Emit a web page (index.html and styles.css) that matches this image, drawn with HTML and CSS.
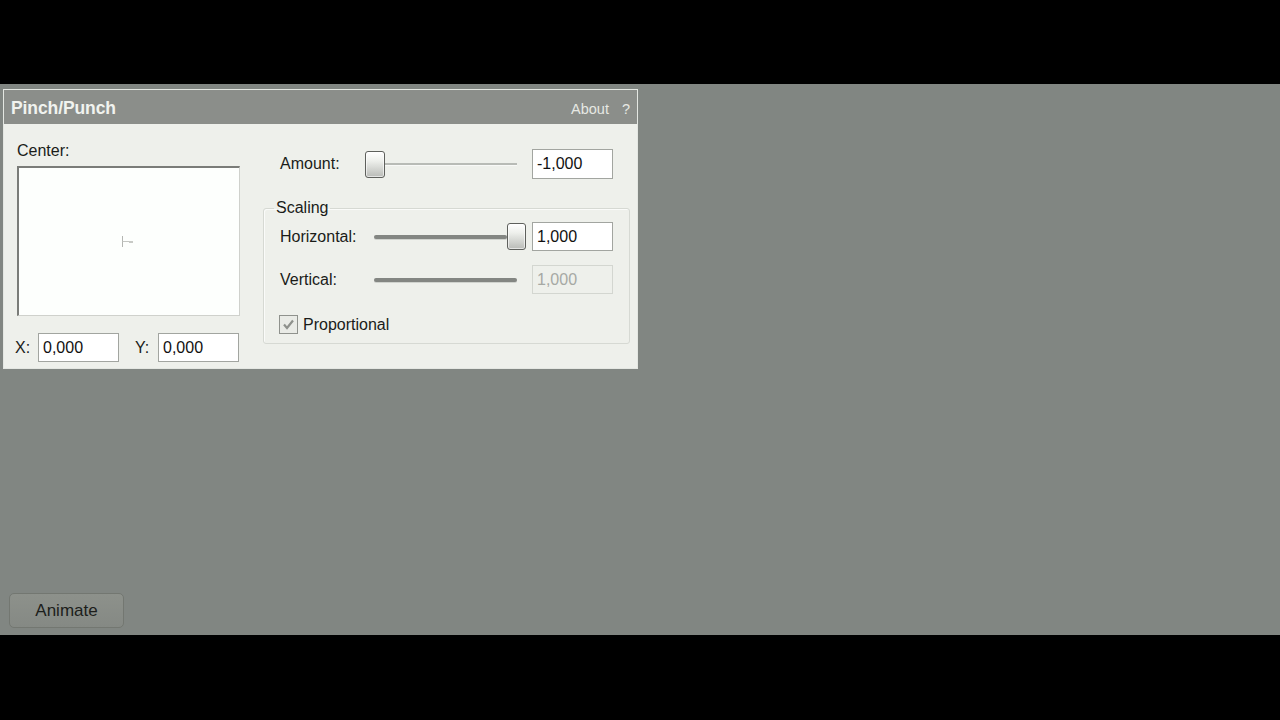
FILE: index.html
```html
<!DOCTYPE html>
<html>
<head>
<meta charset="utf-8">
<link rel="stylesheet" href="styles.css">
</head>
<body>
<div class="screen">
  <div class="band-top"></div>
  <div class="stage">
    <div class="panel">
      <div class="titlebar">
        <span class="title">Pinch/Punch</span>
        <span class="about">About<span class="help">?</span></span>
      </div>
      <div class="panel-body">
        <div class="left-col">
          <div class="label center-label">Center:</div>
          <div class="center-box">
            <svg class="cross" width="14" height="11" viewBox="0 0 14 11">
              <line x1="1.5" y1="0" x2="1.5" y2="11" stroke="#b4b6b2" stroke-width="1"/>
              <line x1="1.5" y1="5.5" x2="12" y2="5.5" stroke="#c4c6c2" stroke-width="1"/>
              <rect x="8" y="5" width="4" height="2" fill="#c8cac6"/>
            </svg>
          </div>
          <div class="xy-row">
            <span class="label xy-label">X:</span>
            <div class="field xy-field">0,000</div>
            <span class="label xy-label y-label">Y:</span>
            <div class="field xy-field">0,000</div>
          </div>
        </div>
        <div class="right-col">
          <div class="row amount-row">
            <span class="label amount-label">Amount:</span>
            <div class="slider amount-slider">
              <div class="thumb"></div>
              <div class="track thin"></div>
            </div>
            <div class="field num-field">-1,000</div>
          </div>
          <fieldset class="group">
            <legend class="label legend">Scaling</legend>
            <div class="row scale-row">
              <span class="label scale-label">Horizontal:</span>
              <div class="slider scale-slider">
                <div class="track thick h-track"></div>
                <div class="thumb"></div>
              </div>
              <div class="field num-field">1,000</div>
            </div>
            <div class="row scale-row v-row">
              <span class="label scale-label">Vertical:</span>
              <div class="slider scale-slider">
                <div class="track thick v-track"></div>
              </div>
              <div class="field num-field disabled">1,000</div>
            </div>
            <div class="row check-row">
              <span class="checkbox">
                <svg width="13" height="13" viewBox="0 0 13 13">
                  <path d="M2 6.5 L5 10 L11 2.5" fill="none" stroke="#8e918c" stroke-width="2.2"/>
                </svg>
              </span>
              <span class="label">Proportional</span>
            </div>
          </fieldset>
        </div>
      </div>
    </div>
    <button class="animate">Animate</button>
  </div>
  <div class="band-bottom"></div>
</div>
</body>
</html>
```

FILE: styles.css
```css
html, body {
  margin: 0;
  padding: 0;
  background: #000;
}

.screen {
  width: 1280px;
  height: 720px;
  display: flex;
  flex-direction: column;
  font-family: "Liberation Sans", Arial, sans-serif;
}

.band-top {
  height: 84px;
  background: #000;
}

.stage {
  height: 551px;
  background: #818682;
  padding: 5px 0 0 3px;
  box-sizing: border-box;
  display: flex;
  flex-direction: column;
  justify-content: space-between;
  align-items: flex-start;
}

.band-bottom {
  flex: 1;
  background: #000;
}

.panel {
  width: 635px;
  height: 280px;
  box-sizing: border-box;
  border: 1px solid #e4e7e2;
  background: #eef0eb;
  display: flex;
  flex-direction: column;
}

.titlebar {
  height: 34px;
  box-sizing: border-box;
  background: #8b8e8a;
  display: flex;
  align-items: center;
  justify-content: space-between;
  padding: 3px 7px 0 7px;
}

.title {
  font-weight: bold;
  font-size: 17.5px;
  color: #f1f3ef;
  letter-spacing: -0.1px;
}

.about {
  font-size: 14.5px;
  color: #e6e8e3;
}

.help {
  margin-left: 13px;
}

.panel-body {
  flex: 1;
  display: flex;
  padding: 18px 0 0 13px;
}

.label {
  font-size: 16px;
  line-height: 18px;
  color: #1a1c19;
}

.left-col {
  width: 223px;
  display: flex;
  flex-direction: column;
}

.center-label {
  margin-bottom: 6px;
}

.center-box {
  height: 150px;
  box-sizing: border-box;
  background: #fdfffd;
  border-top: 2px solid #7a7c78;
  border-left: 2px solid #7a7c78;
  border-right: 1px solid #cfd1cc;
  border-bottom: 1px solid #cfd1cc;
  display: flex;
  align-items: center;
  justify-content: center;
}

.cross {
  margin-right: 3px;
}

.xy-row {
  margin-top: 17px;
  display: flex;
  align-items: center;
  margin-left: -2px;
}

.xy-label {
  width: 23px;
}

.y-label {
  margin-left: 16px;
}

.field {
  box-sizing: border-box;
  height: 29px;
  background: #fff;
  border: 1px solid #a2a5a0;
  font-size: 16px;
  line-height: 27px;
  color: #111;
  padding-left: 4px;
}

.xy-field {
  width: 81px;
}

.num-field {
  width: 81px;
}

.num-field.disabled {
  background: #eef0eb;
  border-color: #d3d6d0;
  color: #a6a9a4;
}

.right-col {
  margin-left: 23px;
  width: 367px;
  padding-top: 7px;
  display: flex;
  flex-direction: column;
}

.row {
  display: flex;
  align-items: center;
}

.amount-row {
  height: 30px;
  padding-left: 17px;
}

.amount-row .num-field {
  height: 30px;
  margin-left: 15px;
}

.amount-label {
  width: 85px;
}

.slider {
  display: flex;
  align-items: center;
  height: 28px;
}

.thumb {
  width: 19px;
  height: 27px;
  box-sizing: border-box;
  border: 1px solid #5e605c;
  border-radius: 3px;
  background: linear-gradient(to bottom, #ffffff 0%, #eef0ec 35%, #b9bbb7 100%);
  box-shadow: inset 0 0 0 1px rgba(255,255,255,0.6);
}

.amount-slider .thumb {
  width: 20px;
}

.track.thin {
  width: 132px;
  height: 2px;
  background: #b8bbb6;
  border-bottom: 1px solid #f8f9f7;
}

.group {
  margin: 20px 0 0 0;
  padding: 0 0 9px 16px;
  border: 1px solid #d6d9d3;
  border-radius: 3px;
  box-shadow: inset 1px 1px 0 #fafbf9;
  min-width: 0;
}

.legend {
  padding: 0 2px;
  margin-left: -6px;
}

.scale-row {
  height: 29px;
  margin-top: 5px;
}

.v-row {
  margin-top: 14px;
}

.scale-label {
  width: 94px;
}

.scale-slider {
  width: 152px;
  margin-right: 6px;
}

.track.thick {
  height: 4px;
  border-radius: 2px;
  background: #838682;
  box-shadow: 0 1px 0 #d0d3ce;
}

.h-track {
  width: 134px;
}

.v-track {
  width: 143px;
}

.check-row {
  margin-top: 21px;
  margin-left: -1px;
}

.checkbox {
  width: 19px;
  height: 19px;
  box-sizing: border-box;
  border: 1px solid #8f928d;
  background: #e9ebe6;
  display: flex;
  align-items: center;
  justify-content: center;
  margin-right: 5px;
}

.animate {
  margin: 0 0 7px 6px;
  width: 115px;
  height: 35px;
  border: 1px solid #737771;
  border-radius: 5px;
  background: linear-gradient(to bottom, #8d918b 0%, #858984 100%);
  font-family: "Liberation Sans", Arial, sans-serif;
  font-size: 17px;
  color: #1c1e1b;
  padding: 0;
}
```
